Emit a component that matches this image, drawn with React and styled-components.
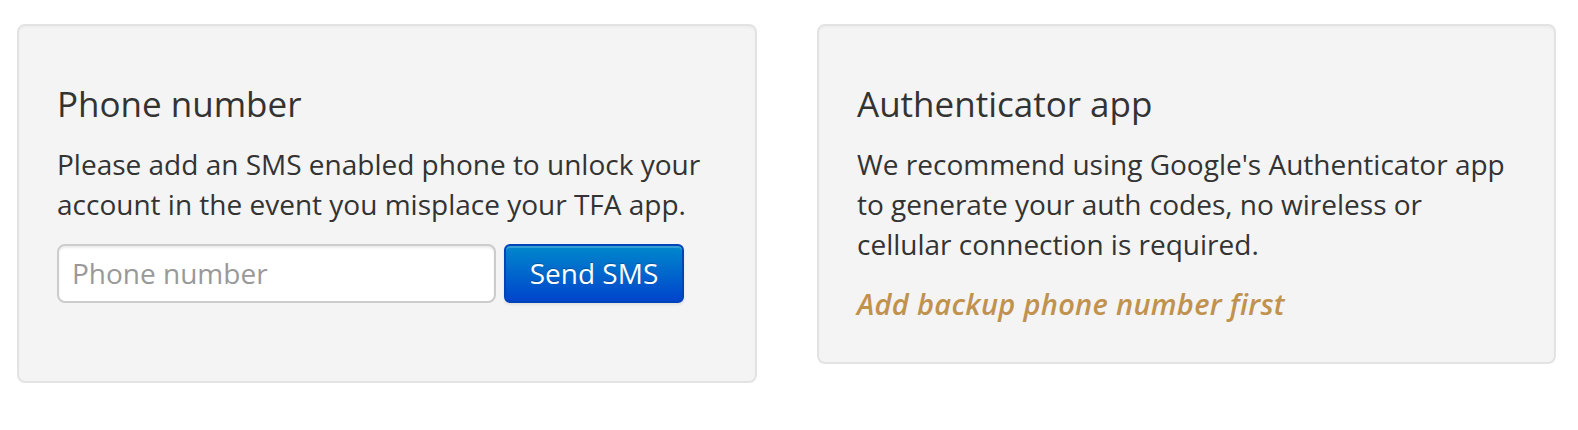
import React from "react";
import styled, { createGlobalStyle } from "styled-components";

const Global = createGlobalStyle`
  html, body { margin: 0; padding: 0; background: #fff; }
  body {
    font-family: "Open Sans", "Noto Sans", "Liberation Sans", sans-serif;
    color: #333;
    -webkit-font-smoothing: antialiased;
  }
`;

const Page = styled.div`
  display: grid;
  grid-template-columns: 740px 739px;
  column-gap: 60px;
  align-items: start;
  padding: 24px 0 0 17px;
`;

const Well = styled.section`
  box-sizing: border-box;
  background: #f4f4f4;
  border: 2px solid #e3e3e3;
  border-radius: 8px;
  padding: 38px;
  box-shadow: inset 0 2px 2px rgba(0, 0, 0, 0.03);
`;

const Title = styled.h4`
  margin: 20px 0 20px;
  font-size: 35px;
  font-weight: 400;
  line-height: 39.6px;
  color: #333;
`;

const Text = styled.p`
  margin: 0 0 20px;
  font-size: 28px;
  line-height: 40px;
  color: #333;
`;

const FormRow = styled.div`
  display: flex;
  gap: 8px;
  margin-bottom: 40px;
`;

const Input = styled.input`
  box-sizing: border-box;
  width: 439px;
  height: 59px;
  padding: 8px 13px;
  border: 2px solid #ccc;
  border-radius: 8px;
  background: #fff;
  box-shadow: inset 0 2px 2px rgba(0, 0, 0, 0.075);
  font-family: inherit;
  font-size: 28px;
  color: #555;
  outline: none;
  &::placeholder { color: #999; }
`;

const Button = styled.button`
  box-sizing: border-box;
  width: 180px;
  height: 59px;
  padding: 0;
  white-space: nowrap;
  border: 2px solid #0044b8;
  border-radius: 6px;
  background: linear-gradient(to bottom, #0088cc, #0044cc);
  box-shadow: inset 0 2px 0 rgba(255, 255, 255, 0.2), 0 2px 3px rgba(0, 0, 0, 0.08);
  color: #fff;
  font-family: inherit;
  font-size: 28px;
  text-shadow: 0 -1px 0 rgba(0, 0, 0, 0.25);
  cursor: pointer;
`;

const Notice = styled.p`
  margin: 0;
  font-size: 29px;
  line-height: 40px;
  font-style: italic;
  font-weight: 600;
  letter-spacing: 0.3px;
  color: #c0924e;
`;

export default function App() {
  return (
    <>
      <Global />
      <Page>
        <Well>
          <Title>Phone number</Title>
          <Text>
            Please add an SMS enabled phone to unlock your
            <br />
            account in the event you misplace your TFA app.
          </Text>
          <FormRow>
            <Input placeholder="Phone number" />
            <Button>Send SMS</Button>
          </FormRow>
        </Well>
        <Well>
          <Title>Authenticator app</Title>
          <Text>
            We recommend using Google's Authenticator app
            <br />
            to generate your auth codes, no wireless or
            <br />
            cellular connection is required.
          </Text>
          <Notice>Add backup phone number first</Notice>
        </Well>
      </Page>
    </>
  );
}
